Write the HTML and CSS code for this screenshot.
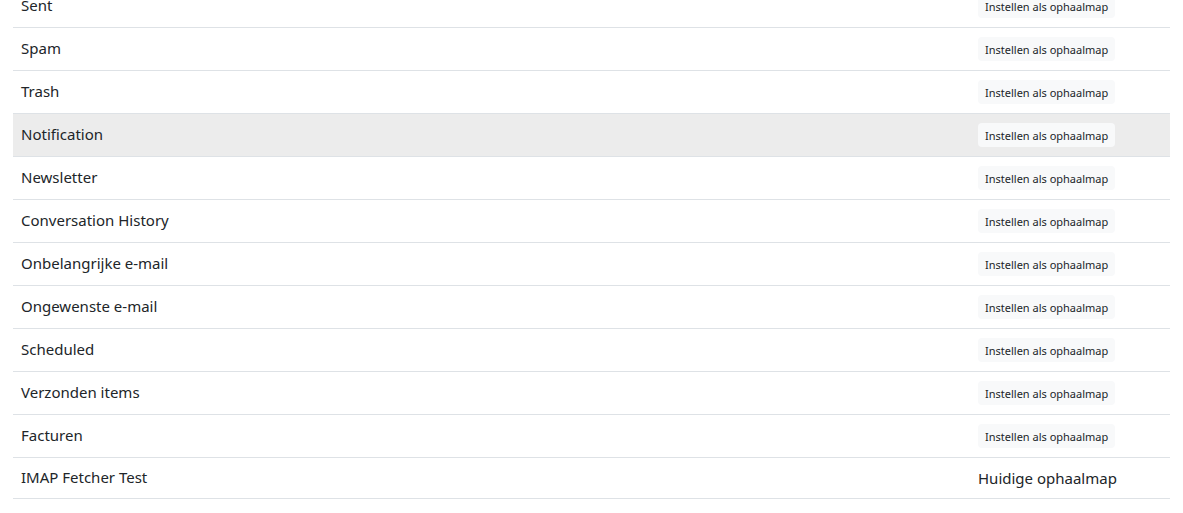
FILE: index.html
```html
<!DOCTYPE html>
<html lang="nl">
<head>
    <meta charset="UTF-8" />
    <meta name="viewport" content="width=device-width, initial-scale=1.0"/>
    <title>Mappen</title>
    <link rel="stylesheet" href="styles.css">
</head>
<body>
    <div class="folders">
        <table class="folder-table">
            <tbody>
                <tr><td>Sent</td><td class="action"><button class="set-btn">Instellen als ophaalmap</button></td></tr>
                <tr><td>Spam</td><td class="action"><button class="set-btn">Instellen als ophaalmap</button></td></tr>
                <tr><td>Trash</td><td class="action"><button class="set-btn">Instellen als ophaalmap</button></td></tr>
                <tr class="hover"><td>Notification</td><td class="action"><button class="set-btn">Instellen als ophaalmap</button></td></tr>
                <tr><td>Newsletter</td><td class="action"><button class="set-btn">Instellen als ophaalmap</button></td></tr>
                <tr><td>Conversation History</td><td class="action"><button class="set-btn">Instellen als ophaalmap</button></td></tr>
                <tr><td>Onbelangrijke e-mail</td><td class="action"><button class="set-btn">Instellen als ophaalmap</button></td></tr>
                <tr><td>Ongewenste e-mail</td><td class="action"><button class="set-btn">Instellen als ophaalmap</button></td></tr>
                <tr><td>Scheduled</td><td class="action"><button class="set-btn">Instellen als ophaalmap</button></td></tr>
                <tr><td>Verzonden items</td><td class="action"><button class="set-btn">Instellen als ophaalmap</button></td></tr>
                <tr><td>Facturen</td><td class="action"><button class="set-btn">Instellen als ophaalmap</button></td></tr>
                <tr class="current-row"><td>IMAP Fetcher Test</td><td class="action"><span class="current">Huidige ophaalmap</span></td></tr>
            </tbody>
        </table>
    </div>
</body>
</html>
```

FILE: styles.css
```css
body {
    margin: 0;
    font-family: "Noto Sans", "Open Sans", sans-serif;
    color: #212529;
    background-color: #fff;
}

.folders {
    padding: 0 13px;
    margin-top: -15px; /* page is scrolled a little */
}

.folder-table {
    width: 100%;
    border-collapse: collapse;
    font-size: 15px;
}

.folder-table td {
    height: 26px;
    padding: 7px 8px 9px;
    border-bottom: 1px solid #dee2e6;
    vertical-align: middle;
}

.folder-table td.action {
    padding: 8px;
    width: 184px;
}

.folder-table tr.current-row td {
    height: 24px;
}

.folder-table tr.hover td {
    background-color: #ececec;
}

.set-btn {
    font-family: inherit;
    font-size: 11px;
    color: #212529;
    background-color: #f8f9fa;
    border: none;
    border-radius: 4px;
    padding: 4px 7px;
    height: 24px;
    cursor: pointer;
}

.current {
    font-size: 15px;
}
```
